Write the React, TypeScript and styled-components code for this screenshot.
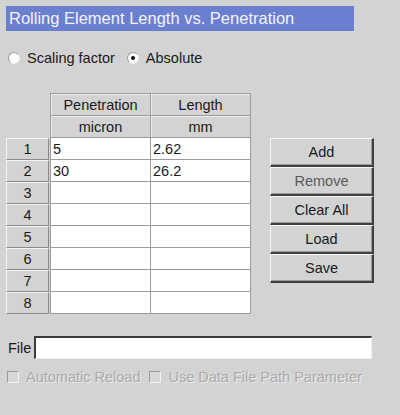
import styled, { createGlobalStyle } from "styled-components";

const GlobalStyle = createGlobalStyle`
  html, body {
    margin: 0;
    padding: 0;
    background: #d3d3d3;
  }
  body {
    font-family: "Liberation Sans", Arial, sans-serif;
  }
`;

const Page = styled.div`
  width: 400px;
  height: 415px;
  box-sizing: border-box;
  padding: 6px 0 0 6px;
  background: #d3d3d3;
  color: #1a1a1a;
  font-size: 14.5px;
  display: flex;
  flex-direction: column;
`;

const TitleBar = styled.div`
  width: 348px;
  height: 25px;
  box-sizing: border-box;
  background: #6b7fd1;
  color: #f2f4ff;
  font-size: 16.5px;
  line-height: 25px;
  padding-left: 3px;
  white-space: nowrap;
`;

const RadioRow = styled.div`
  display: flex;
  align-items: center;
  gap: 10px;
  margin-top: 19px;
  height: 16px;
`;

const RadioLabel = styled.label`
  display: flex;
  align-items: center;
  gap: 7px;
`;

const RadioDot = styled.span<{ $checked?: boolean }>`
  width: 12px;
  height: 12px;
  border-radius: 50%;
  box-sizing: border-box;
  background: #ffffff;
  border: 1px solid #9a9a9a;
  border-right-color: #ececec;
  border-bottom-color: #ececec;
  display: flex;
  align-items: center;
  justify-content: center;
  margin-left: 2px;

  &::after {
    content: "";
    width: 4px;
    height: 4px;
    border-radius: 50%;
    background: ${({ $checked }) => ($checked ? "#111" : "transparent")};
  }
`;

const Middle = styled.div`
  display: flex;
  align-items: flex-start;
  margin-top: 27px;
`;

const Table = styled.div`
  display: grid;
  grid-template-columns: 44px 101px 100px;
  grid-template-rows: 23px 22px repeat(8, 22px);
`;

const Row = styled.div`
  display: contents;
`;

const Corner = styled.div``;

const HeadCell = styled.div<{ $top?: boolean; $first?: boolean }>`
  box-sizing: border-box;
  background: #d3d3d3;
  border-right: 1px solid #9c9c9c;
  border-bottom: 1px solid #9c9c9c;
  border-top: ${({ $top }) => ($top ? "1px solid #9c9c9c" : "none")};
  border-left: ${({ $first }) => ($first ? "1px solid #9c9c9c" : "none")};
  box-shadow: inset 1px 1px 0 #ededed;
  display: flex;
  align-items: center;
  justify-content: center;
`;

const RowHead = styled.div`
  box-sizing: border-box;
  margin-right: 1px;
  background: #d3d3d3;
  border-top: 1px solid #f4f4f4;
  border-left: 1px solid #f4f4f4;
  border-right: 1px solid #8a8a8a;
  border-bottom: 1px solid #8a8a8a;
  display: flex;
  align-items: center;
  justify-content: center;
`;

const DataCell = styled.div<{ $last?: boolean }>`
  box-sizing: border-box;
  background: #ffffff;
  border-right: 1px solid #9c9c9c;
  border-bottom: 1px solid #9c9c9c;
  border-left: ${({ $last }) => ($last ? "none" : "1px solid #9c9c9c")};
  display: flex;
  align-items: center;
  padding-left: 2px;
`;

const ButtonColumn = styled.div`
  display: flex;
  flex-direction: column;
  margin-left: 19px;
  margin-top: 45px;
`;

const ActionButton = styled.button<{ $muted?: boolean }>`
  width: 104px;
  height: 29px;
  box-sizing: border-box;
  background: #d3d3d3;
  border: none;
  border-top: 1px solid #f6f6f6;
  border-left: 1px solid #f6f6f6;
  border-right: 2px solid #404040;
  border-bottom: 2px solid #404040;
  box-shadow: inset -1px -1px 0 #9a9a9a;
  font-family: "Liberation Sans", Arial, sans-serif;
  font-size: 14.5px;
  color: ${({ $muted }) => ($muted ? "#5a5a5a" : "#1a1a1a")};
  padding: 0;
`;

const FileRow = styled.div`
  display: flex;
  align-items: center;
  margin-top: 22px;
  gap: 3px;
  padding-left: 2px;
`;

const FileInput = styled.div`
  width: 338px;
  height: 23px;
  box-sizing: border-box;
  background: #ffffff;
  border-top: 2px solid #3a3a3a;
  border-left: 2px solid #3a3a3a;
  border-right: 1px solid #f0f0f0;
  border-bottom: 1px solid #f0f0f0;
`;

const CheckRow = styled.div`
  display: flex;
  align-items: center;
  margin-top: 10px;
  gap: 9px;
  padding-left: 1px;
`;

const CheckLabel = styled.label`
  display: flex;
  align-items: center;
  gap: 7px;
  color: #ababab;
  text-shadow: 1px 1px 0 #ececec;
`;

const CheckBox = styled.span`
  width: 12px;
  height: 12px;
  box-sizing: border-box;
  background: #d8d8d8;
  border-top: 1px solid #9a9a9a;
  border-left: 1px solid #9a9a9a;
  border-right: 1px solid #f2f2f2;
  border-bottom: 1px solid #f2f2f2;
`;

const rows: [string, string][] = [
  ["5", "2.62"],
  ["30", "26.2"],
  ["", ""],
  ["", ""],
  ["", ""],
  ["", ""],
  ["", ""],
  ["", ""],
];

export default function App() {
  return (
    <Page>
      <GlobalStyle />
      <TitleBar>Rolling Element Length vs. Penetration</TitleBar>
      <RadioRow>
        <RadioLabel>
          <RadioDot />
          Scaling factor
        </RadioLabel>
        <RadioLabel>
          <RadioDot $checked />
          Absolute
        </RadioLabel>
      </RadioRow>
      <Middle>
        <Table>
          <Row>
            <Corner />
            <HeadCell $top $first>Penetration</HeadCell>
            <HeadCell $top>Length</HeadCell>
          </Row>
          <Row>
            <Corner />
            <HeadCell $first>micron</HeadCell>
            <HeadCell>mm</HeadCell>
          </Row>
          {rows.map(([pen, len], i) => (
            <Row key={i}>
              <RowHead>{i + 1}</RowHead>
              <DataCell>{pen}</DataCell>
              <DataCell $last>{len}</DataCell>
            </Row>
          ))}
        </Table>
        <ButtonColumn>
          <ActionButton>Add</ActionButton>
          <ActionButton $muted>Remove</ActionButton>
          <ActionButton>Clear All</ActionButton>
          <ActionButton>Load</ActionButton>
          <ActionButton>Save</ActionButton>
        </ButtonColumn>
      </Middle>
      <FileRow>
        File
        <FileInput />
      </FileRow>
      <CheckRow>
        <CheckLabel>
          <CheckBox />
          Automatic Reload
        </CheckLabel>
        <CheckLabel>
          <CheckBox />
          Use Data File Path Parameter
        </CheckLabel>
      </CheckRow>
    </Page>
  );
}
